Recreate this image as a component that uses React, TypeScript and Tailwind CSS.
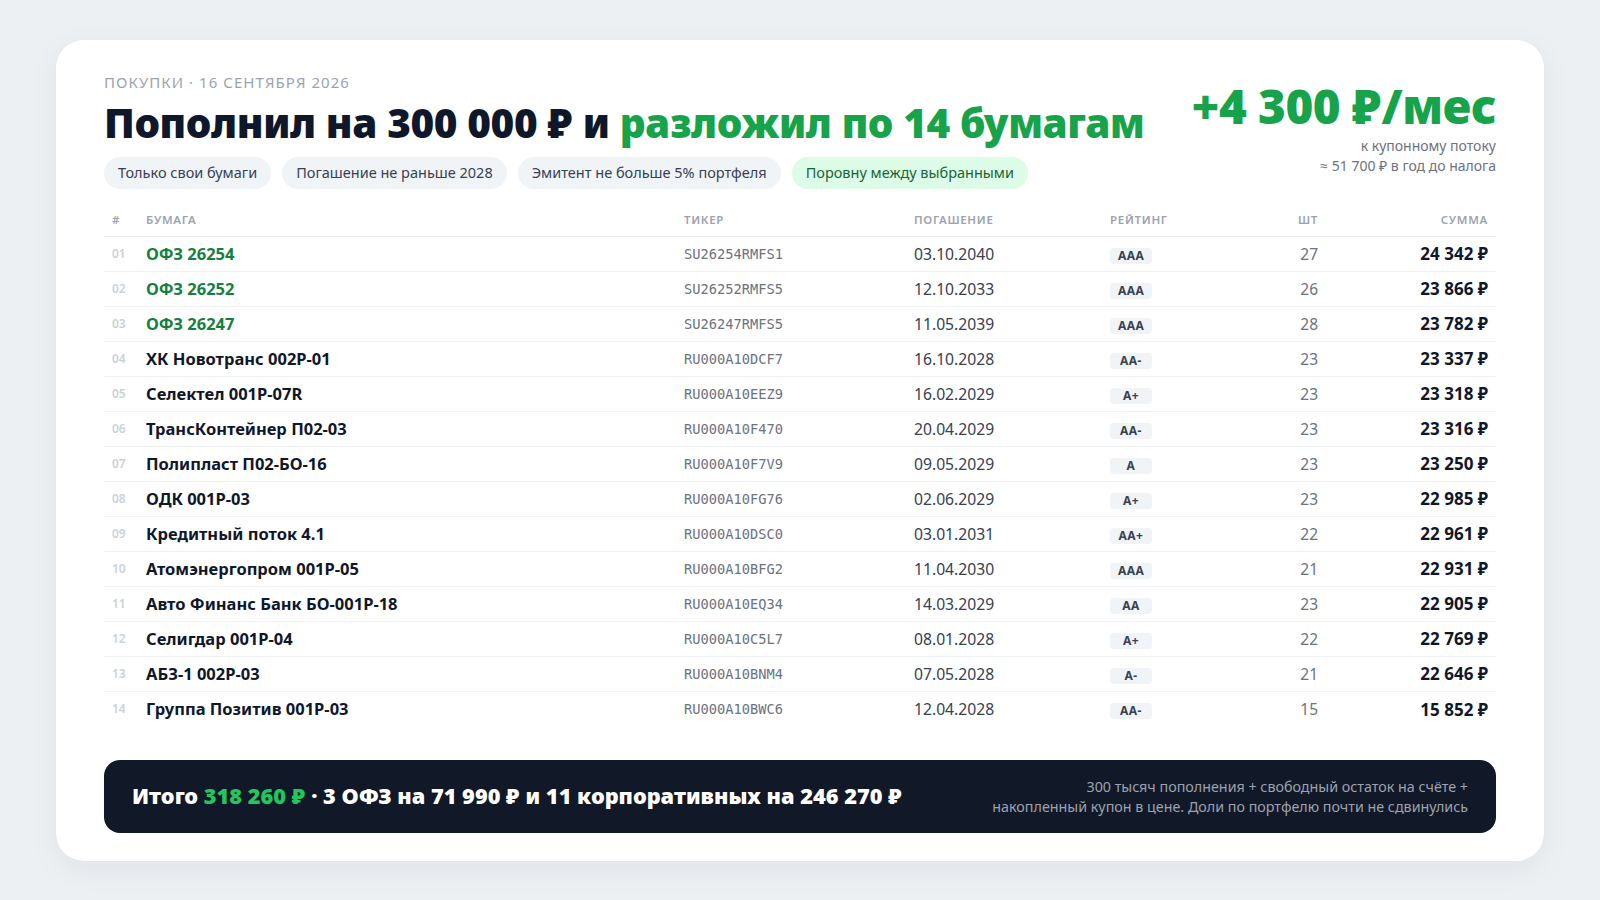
const bonds = [
  { name: "ОФЗ 26254", ticker: "SU26254RMFS1", date: "03.10.2040", rating: "AAA", qty: 27, sum: "24 342 ₽", ofz: true },
  { name: "ОФЗ 26252", ticker: "SU26252RMFS5", date: "12.10.2033", rating: "AAA", qty: 26, sum: "23 866 ₽", ofz: true },
  { name: "ОФЗ 26247", ticker: "SU26247RMFS5", date: "11.05.2039", rating: "AAA", qty: 28, sum: "23 782 ₽", ofz: true },
  { name: "ХК Новотранс 002P-01", ticker: "RU000A10DCF7", date: "16.10.2028", rating: "AA-", qty: 23, sum: "23 337 ₽" },
  { name: "Селектел 001P-07R", ticker: "RU000A10EEZ9", date: "16.02.2029", rating: "A+", qty: 23, sum: "23 318 ₽" },
  { name: "ТрансКонтейнер П02-03", ticker: "RU000A10F470", date: "20.04.2029", rating: "AA-", qty: 23, sum: "23 316 ₽" },
  { name: "Полипласт П02-БО-16", ticker: "RU000A10F7V9", date: "09.05.2029", rating: "A", qty: 23, sum: "23 250 ₽" },
  { name: "ОДК 001P-03", ticker: "RU000A10FG76", date: "02.06.2029", rating: "A+", qty: 23, sum: "22 985 ₽" },
  { name: "Кредитный поток 4.1", ticker: "RU000A10DSC0", date: "03.01.2031", rating: "AA+", qty: 22, sum: "22 961 ₽" },
  { name: "Атомэнергопром 001P-05", ticker: "RU000A10BFG2", date: "11.04.2030", rating: "AAA", qty: 21, sum: "22 931 ₽" },
  { name: "Авто Финанс Банк БО-001P-18", ticker: "RU000A10EQ34", date: "14.03.2029", rating: "AA", qty: 23, sum: "22 905 ₽" },
  { name: "Селигдар 001P-04", ticker: "RU000A10C5L7", date: "08.01.2028", rating: "A+", qty: 22, sum: "22 769 ₽" },
  { name: "АБЗ-1 002P-03", ticker: "RU000A10BNM4", date: "07.05.2028", rating: "A-", qty: 21, sum: "22 646 ₽" },
  { name: "Группа Позитив 001P-03", ticker: "RU000A10BWC6", date: "12.04.2028", rating: "AA-", qty: 15, sum: "15 852 ₽" },
];

const chips = [
  "Только свои бумаги",
  "Погашение не раньше 2028",
  "Эмитент не больше 5% портфеля",
];

const Chip = ({ label, active }: { label: string; active?: boolean }) => (
  <span
    className={`h-8 px-3.5 flex items-center rounded-full text-[14.5px] ${
      active ? "bg-[#dcfce7] text-[#166534]" : "bg-[#f1f4f7] text-[#374151]"
    }`}
  >
    {label}
  </span>
);

export default function App() {
  return (
    <div
      className="w-full h-[900px] bg-[#edf0f3] px-14 pt-10"
      style={{ fontFamily: "'Noto Sans', 'Open Sans', sans-serif" }}
    >
      <div className="bg-white rounded-[28px] shadow-[0_8px_30px_rgba(15,23,42,0.06)] px-12 pt-8 pb-7">
        {/* header */}
        <div className="flex justify-between items-start">
          <div>
            <div className="text-[15px] leading-5 tracking-[0.07em] uppercase text-[#9ca3af]">
              Покупки · 16 сентября 2026
            </div>
            <h1 className="mt-[7px] text-[40.5px] leading-[48px] font-black text-[#0f172a] tracking-[-0.01em]">
              Пополнил на 300 000 ₽ и{" "}
              <span className="text-[#16a34a]">разложил по 14 бумагам</span>
            </h1>
            <div className="mt-2.5 flex gap-[11px]">
              {chips.map((c) => (
                <Chip key={c} label={c} />
              ))}
              <Chip label="Поровну между выбранными" active />
            </div>
          </div>
          <div className="pt-[10px] text-right">
            <div className="text-[47.5px] leading-none font-black text-[#16a34a] tracking-[-0.01em]">
              +4 300 ₽/мес
            </div>
            <div className="mt-1.5 text-[14px] leading-5 text-[#6b7280]">
              к купонному потоку
            </div>
            <div className="text-[14px] leading-5 text-[#6b7280]">
              ≈ 51 700 ₽ в год до налога
            </div>
          </div>
        </div>

        {/* table */}
        <table className="mt-[15px] w-full table-fixed border-collapse">
          <colgroup>
            <col className="w-[34px]" />
            <col className="w-[538px]" />
            <col className="w-[230px]" />
            <col className="w-[196px]" />
            <col className="w-[124px]" />
            <col className="w-[100px]" />
            <col />
          </colgroup>
          <thead>
            <tr className="h-8 border-b border-[#e5e7eb] text-[11.5px] font-semibold uppercase tracking-[0.06em] text-[#9ca3af]">
              <th className="px-2 text-left font-semibold">#</th>
              <th className="px-2 text-left font-semibold">Бумага</th>
              <th className="px-2 text-left font-semibold">Тикер</th>
              <th className="px-2 text-left font-semibold">Погашение</th>
              <th className="px-2 text-left font-semibold">Рейтинг</th>
              <th className="px-2 text-right font-semibold">Шт</th>
              <th className="px-2 text-right font-semibold">Сумма</th>
            </tr>
          </thead>
          <tbody>
            {bonds.map((b, i) => (
              <tr
                key={b.ticker}
                className={`h-[35px] ${i < bonds.length - 1 ? "border-b border-[#f0f2f5]" : ""}`}
              >
                <td className="px-2 pt-px text-[12px] font-semibold text-[#cbd1d8]">
                  {String(i + 1).padStart(2, "0")}
                </td>
                <td
                  className={`px-2 pt-0.5 text-[16.5px] font-bold ${
                    b.ofz ? "text-[#15803d]" : "text-[#0f172a]"
                  }`}
                >
                  {b.name}
                </td>
                <td
                  className="px-2 pt-px text-[13.7px] text-[#6b7280]"
                  style={{ fontFamily: "'DejaVu Sans Mono', monospace" }}
                >
                  {b.ticker}
                </td>
                <td className="px-2 pt-0.5 text-[15.7px] text-[#374151]">{b.date}</td>
                <td className="px-2">
                  <span className="inline-block min-w-[42px] text-center rounded-[4px] bg-[#f1f4f7] px-2 text-[12px] leading-4 font-bold tracking-[0.04em] text-[#374151]">
                    {b.rating}
                  </span>
                </td>
                <td className="px-2 pt-0.5 text-right text-[15.5px] text-[#6b7280]">
                  {b.qty}
                </td>
                <td className="px-2 pt-px text-right text-[17px] font-bold text-[#0f172a]">
                  {b.sum}
                </td>
              </tr>
            ))}
          </tbody>
        </table>

        {/* total */}
        <div className="mt-[34px] h-[73px] rounded-2xl bg-[#111827] px-7 flex items-center justify-between">
          <div className="text-[21.8px] font-black text-white">
            Итого <span className="text-[#22c55e]">318 260 ₽</span> · 3 ОФЗ на 71 990 ₽ и 11
            корпоративных на 246 270 ₽
          </div>
          <div className="text-right text-[14.3px] leading-5 text-[#9ca3af]">
            300 тысяч пополнения + свободный остаток на счёте +
            <br />
            накопленный купон в цене. Доли по портфелю почти не сдвинулись
          </div>
        </div>
      </div>
    </div>
  );
}
